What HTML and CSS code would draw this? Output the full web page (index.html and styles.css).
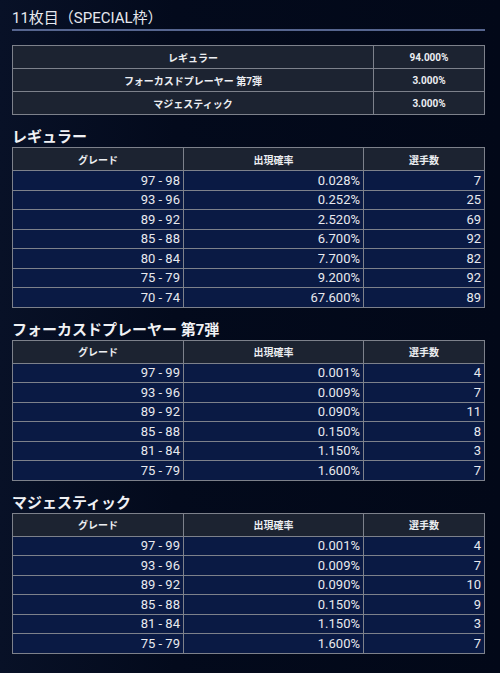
FILE: index.html
```html
<!DOCTYPE html>
<html lang="ja">
<head>
<meta charset="utf-8">
<link rel="stylesheet" href="styles.css">
</head>
<body>
<div class="page">
  <h1 class="title">11枚目（SPECIAL枠）</h1>

  <table class="summary">
    <tr><td class="s-name">レギュラー</td><td class="s-rate">94.000%</td></tr>
    <tr><td class="s-name">フォーカスドプレーヤー 第7弾</td><td class="s-rate">3.000%</td></tr>
    <tr><td class="s-name">マジェスティック</td><td class="s-rate">3.000%</td></tr>
  </table>

  <h2 class="sec">レギュラー</h2>
  <table class="grid">
    <tr class="head"><th class="c1">グレード</th><th class="c2">出現確率</th><th class="c3">選手数</th></tr>
    <tr><td>97 - 98</td><td>0.028%</td><td>7</td></tr>
    <tr><td>93 - 96</td><td>0.252%</td><td>25</td></tr>
    <tr><td>89 - 92</td><td>2.520%</td><td>69</td></tr>
    <tr><td>85 - 88</td><td>6.700%</td><td>92</td></tr>
    <tr><td>80 - 84</td><td>7.700%</td><td>82</td></tr>
    <tr><td>75 - 79</td><td>9.200%</td><td>92</td></tr>
    <tr><td>70 - 74</td><td>67.600%</td><td>89</td></tr>
  </table>

  <h2 class="sec">フォーカスドプレーヤー 第7弾</h2>
  <table class="grid">
    <tr class="head"><th class="c1">グレード</th><th class="c2">出現確率</th><th class="c3">選手数</th></tr>
    <tr><td>97 - 99</td><td>0.001%</td><td>4</td></tr>
    <tr><td>93 - 96</td><td>0.009%</td><td>7</td></tr>
    <tr><td>89 - 92</td><td>0.090%</td><td>11</td></tr>
    <tr><td>85 - 88</td><td>0.150%</td><td>8</td></tr>
    <tr><td>81 - 84</td><td>1.150%</td><td>3</td></tr>
    <tr><td>75 - 79</td><td>1.600%</td><td>7</td></tr>
  </table>

  <h2 class="sec">マジェスティック</h2>
  <table class="grid">
    <tr class="head"><th class="c1">グレード</th><th class="c2">出現確率</th><th class="c3">選手数</th></tr>
    <tr><td>97 - 99</td><td>0.001%</td><td>4</td></tr>
    <tr><td>93 - 96</td><td>0.009%</td><td>7</td></tr>
    <tr><td>89 - 92</td><td>0.090%</td><td>10</td></tr>
    <tr><td>85 - 88</td><td>0.150%</td><td>9</td></tr>
    <tr><td>81 - 84</td><td>1.150%</td><td>3</td></tr>
    <tr><td>75 - 79</td><td>1.600%</td><td>7</td></tr>
  </table>
</div>
</body>
</html>
```

FILE: styles.css
```css
html, body {
  margin: 0;
  padding: 0;
}
body {
  background: linear-gradient(90deg, #081127 0%, #030a1c 35%, #020818 100%);
  color: #e8e9ec;
  font-family: Roboto, "Noto Sans CJK JP", sans-serif;
  min-height: 673px;
}
.page {
  width: 473px;
  padding: 8px 0 0 12px;
}
.title {
  margin: 0;
  font-size: 15px;
  font-weight: 400;
  line-height: 20px;
  padding-bottom: 1px;
  border-bottom: 2px solid #56658f;
  color: #e6e8ee;
}
table {
  width: 473px;
  border-collapse: collapse;
  table-layout: fixed;
}
td, th {
  border: 1px solid #7d818b;
  padding: 0;
}
.summary {
  margin-top: 14px;
}
.summary td {
  background: #1c2331;
  height: 22px;
  font-size: 10px;
  font-weight: 700;
  text-align: center;
  color: #eceef2;
}
.summary .s-rate {
  width: 110px;
}
.sec {
  margin: 12px 0 0;
  font-size: 15px;
  font-weight: 700;
  line-height: 20px;
  color: #f0f1f4;
}
.grid .head th {
  background: #1c2331;
  height: 22px;
  font-size: 10px;
  font-weight: 700;
  text-align: center;
  color: #eceef2;
}
.grid .c1 { width: 170px; }
.grid .c2 { width: 179px; }
.grid td {
  background: #0a1a44;
  height: 18.5px;
  font-size: 13px;
  line-height: 15px;
  text-align: right;
  padding-right: 3px;
  color: #e8e9ee;
}
```
